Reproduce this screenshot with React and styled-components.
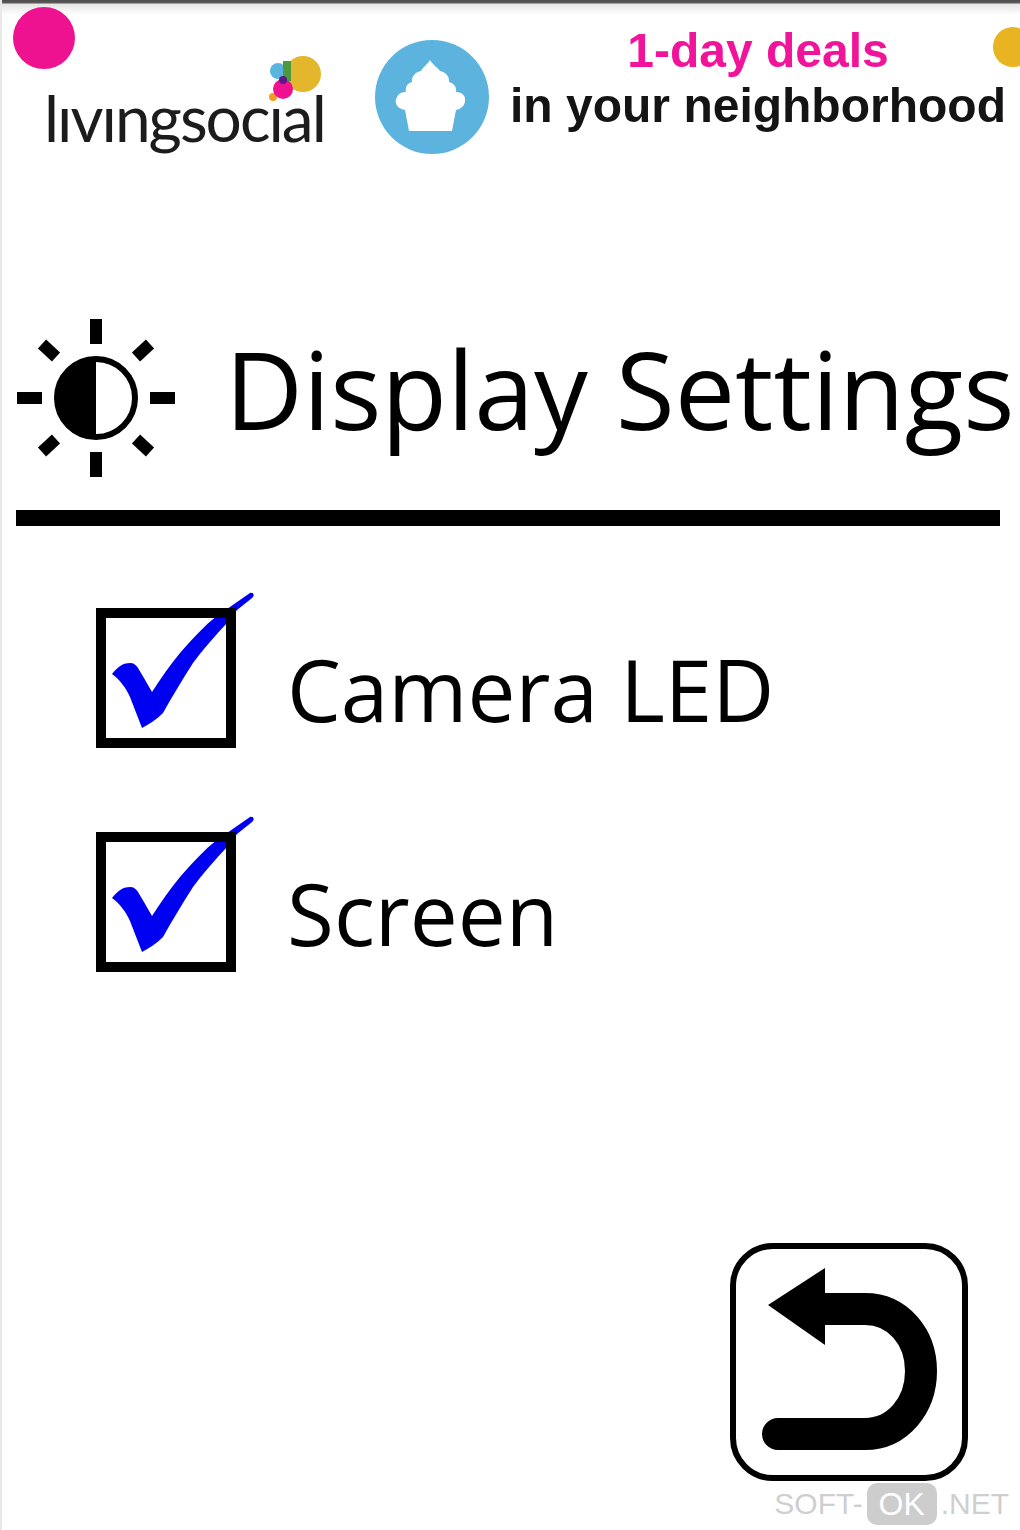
import React from "react";
import styled, { createGlobalStyle } from "styled-components";

const GlobalStyle = createGlobalStyle`
  html, body {
    margin: 0;
    padding: 0;
    background: #fff;
  }
`;

const Screen = styled.div`
  position: relative;
  box-sizing: border-box;
  width: 1020px;
  height: 1530px;
  display: flex;
  flex-direction: column;
  overflow: hidden;
  background: #fff;
  border-left: 2px solid #e9e9e9;
  font-family: "Open Sans", "Noto Sans", sans-serif;
  color: #000;
`;

const TopShade = styled.div`
  flex: none;
  height: 15px;
  margin-left: -2px;
  background: linear-gradient(#4c4c4c 0, #5c5c5c 3px, #e6e6e6 4px, #fff 15px);
`;

const Banner = styled.div`
  position: relative;
  flex: none;
  height: 160px;
  display: flex;
  align-items: flex-start;
  filter: blur(0.7px);
`;

const Dot = styled.span`
  position: absolute;
  top: ${(p) => p.$top}px;
  left: ${(p) => p.$left}px;
  width: ${(p) => p.$size}px;
  height: ${(p) => p.$size}px;
  border-radius: 50%;
  background: ${(p) => p.$color};
`;

const Logo = styled.div`
  position: relative;
  flex: none;
  width: 372px;
  padding: 68px 0 0 42px;
  box-sizing: border-box;
`;

const LogoText = styled.span`
  display: block;
  font-family: "Lato", sans-serif;
  font-weight: 400;
  font-size: 64px;
  line-height: 70px;
  letter-spacing: -2px;
  color: #1c1c1c;
`;

const LogoBlobs = styled.svg`
  position: absolute;
  top: 38px;
  left: 266px;
`;

const Cupcake = styled.svg`
  flex: none;
  margin-top: 24px;
`;

const Tagline = styled.div`
  flex: none;
  width: 500px;
  margin-left: 18px;
  padding-top: 8px;
  text-align: center;
  font-family: "Liberation Sans", Arial, sans-serif;
  font-weight: 700;
  font-size: 48px;
  line-height: 55px;
  white-space: nowrap;
`;

const Pink = styled.div`
  color: #f0149a;
`;

const Dark = styled.div`
  color: #141414;
`;

const Header = styled.div`
  flex: none;
  margin-top: 143px;
  display: flex;
  align-items: center;
  gap: 49px;
  padding-left: 14px;
  svg {
    flex: none;
  }
`;

const Title = styled.h1`
  margin: 0 0 20px;
  font-weight: 400;
  font-size: 107.5px;
  line-height: 140px;
  white-space: nowrap;
`;

const Rule = styled.div`
  flex: none;
  width: 984px;
  height: 16px;
  margin: 32px 0 0 14px;
  background: #000;
`;

const Options = styled.div`
  flex: none;
  margin-top: 82px;
  padding-left: 94px;
  display: flex;
  flex-direction: column;
  gap: 84px;
`;

const Option = styled.label`
  display: flex;
  align-items: center;
  gap: 51px;
`;

const Box = styled.span`
  position: relative;
  flex: none;
  width: 140px;
  height: 140px;
  &::after {
    content: "";
    position: absolute;
    inset: 0;
    border: 10px solid #000;
  }
`;

const Tick = styled.svg`
  position: absolute;
  top: -16px;
  left: 0;
`;

const OptionLabel = styled.span`
  padding-top: 22px;
  font-size: 85.5px;
  line-height: 114px;
`;

const Footer = styled.div`
  margin-top: auto;
  padding: 0 52px 49px 0;
  display: flex;
  justify-content: flex-end;
`;

const BackButton = styled.button`
  width: 238px;
  height: 238px;
  padding: 0;
  border: 0;
  background: none;
  cursor: pointer;
  svg {
    display: block;
  }
`;

const Watermark = styled.div`
  position: absolute;
  right: 11px;
  bottom: 5px;
  display: flex;
  align-items: center;
  gap: 4px;
  font-family: "Liberation Sans", Arial, sans-serif;
  font-size: 30px;
  line-height: 42px;
  color: #cfcfcf;
`;

const WatermarkPill = styled.span`
  width: 70px;
  text-align: center;
  border-radius: 10px;
  background: #cdcdcd;
  color: #fff;
  font-size: 32px;
`;

const Checkmark = () => (
  <Tick width="160" height="140" viewBox="0 -16 160 140">
    <path
      d="M16 66 C22 58 28 55 34 55 C38 55 40 57 42 60 C47 68 52 77 56 84 C65 70 74 57 84 45 C96 31 108 18 122 7 L131 1 L154 -15 C158 -16 159 -12 156 -10 L141 2 L131 15 C119 28 107 41 97 55 C86 72 76 89 67 105 C60 112 53 116 46 120 C42 110 38 99 34 89 C30 80 24 72 16 66 Z"
      fill="#0000f0"
    />
  </Tick>
);

const SunIcon = () => (
  <svg width="160" height="160" viewBox="0 0 160 160">
    <g stroke="#000" strokeWidth="12">
      <line x1="80" y1="1" x2="80" y2="26" />
      <line x1="80" y1="134" x2="80" y2="159" />
      <line x1="1" y1="80" x2="26" y2="80" />
      <line x1="134" y1="80" x2="159" y2="80" />
      <line x1="26" y1="26" x2="40" y2="39" />
      <line x1="134" y1="26" x2="120" y2="39" />
      <line x1="26" y1="134" x2="40" y2="121" />
      <line x1="134" y1="134" x2="120" y2="121" />
    </g>
    <circle cx="80" cy="80" r="39" fill="#fff" stroke="#000" strokeWidth="6" />
    <path d="M80 41 A39 39 0 0 0 80 119 Z" fill="#000" />
  </svg>
);

const BackIcon = () => (
  <svg width="238" height="238" viewBox="0 0 238 238">
    <rect x="3" y="3" width="232" height="232" rx="40" fill="#fff" stroke="#000" strokeWidth="6" />
    <path
      d="M48 191 H135 C168 191 191 162 191 128 C191 94 168 66 135 66 H90"
      fill="none"
      stroke="#000"
      strokeWidth="32"
      strokeLinecap="round"
    />
    <path d="M38 62 L95 25 V102 Z" fill="#000" />
  </svg>
);

const options = ["Camera LED", "Screen"];

const App = () => {
  return (
    <Screen>
      <GlobalStyle />
      <TopShade />
      <Banner>
        <Dot $top={-8} $left={11} $size={62} $color="#ee1290" />
        <Dot $top={12} $left={991} $size={40} $color="#e8b422" />
        <Logo>
          <LogoText>lıvıngsocıal</LogoText>
          <LogoBlobs width="60" height="60" viewBox="0 0 60 60">
            <circle cx="35" cy="21" r="18" fill="#e3b62c" />
            <circle cx="10" cy="18" r="8" fill="#5bb4e0" />
            <rect x="15" y="8" width="8" height="20" fill="#4c9a3c" />
            <circle cx="5" cy="44" r="4" fill="#f59a23" />
            <circle cx="15" cy="36" r="10" fill="#ee1290" />
            <circle cx="15" cy="27" r="4" fill="#5a1a8c" />
          </LogoBlobs>
        </Logo>
        <Cupcake width="116" height="116" viewBox="0 0 116 116">
          <circle cx="58" cy="58" r="57" fill="#5cb3dd" />
          <path
            d="M35 92 L31 71 C22 70 20 62 23 58 C25 54 28 53 32 53 C31 47 34 44 38 43 C37 37 42 33 47 32 C49 28 53 26 56 21 C59 26 63 28 66 32 C71 33 76 37 75 43 C79 44 83 47 82 53 C86 53 90 55 91 59 C92 65 88 70 82 71 L78 92 Z"
            fill="#fff"
          />
        </Cupcake>
        <Tagline>
          <Pink>1-day deals</Pink>
          <Dark>in your neighborhood</Dark>
        </Tagline>
      </Banner>
      <Header>
        <SunIcon />
        <Title>Display Settings</Title>
      </Header>
      <Rule />
      <Options>
        {options.map((name) => (
          <Option key={name}>
            <Box>
              <Checkmark />
            </Box>
            <OptionLabel>{name}</OptionLabel>
          </Option>
        ))}
      </Options>
      <Footer>
        <BackButton aria-label="Back">
          <BackIcon />
        </BackButton>
      </Footer>
      <Watermark>
        <span>SOFT-</span>
        <WatermarkPill>OK</WatermarkPill>
        <span>.NET</span>
      </Watermark>
    </Screen>
  );
};

export default App;
